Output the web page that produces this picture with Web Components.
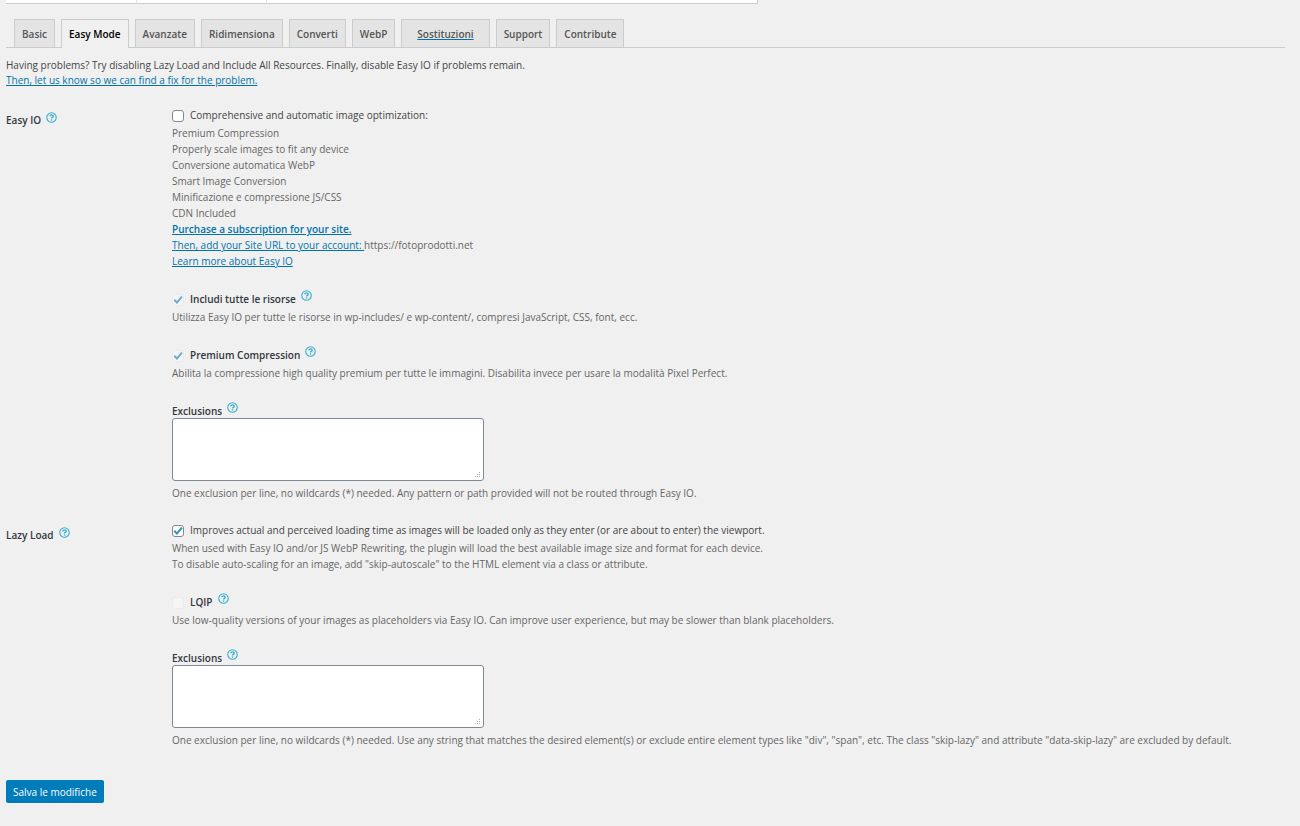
<!DOCTYPE html>
<html lang="it">
<head>
<meta charset="utf-8">
<meta name="viewport" content="width=device-width, initial-scale=1">
<title>Easy Mode</title>
<style>
  :root {
    --bg: #f0f0f0;
    --line: #ccc;
    --link: #0073aa;
    --text: #444;
    --strong: #32373c;
    --muted: #666;
    --control: #7e8993;
    --help: #35b0cd;
  }
  body {
    margin: 0;
    background: var(--bg);
    color: var(--text);
    font: 10px/16px "Open Sans", "Noto Sans", sans-serif;
  }
  a { color: var(--link); }
  b { font-weight: 600; }
</style>
</head>
<body>
<settings-page>
  <status-strip slot="status"></status-strip>
  <nav-tabs slot="tabs">
    <nav-tab>Basic</nav-tab>
    <nav-tab active>Easy Mode</nav-tab>
    <nav-tab>Avanzate</nav-tab>
    <nav-tab>Ridimensiona</nav-tab>
    <nav-tab>Converti</nav-tab>
    <nav-tab>WebP</nav-tab>
    <nav-tab linked>Sostituzioni</nav-tab>
    <nav-tab>Support</nav-tab>
    <nav-tab>Contribute</nav-tab>
  </nav-tabs>
  <span slot="notice">Having problems? Try disabling Lazy Load and Include All Resources. Finally, disable Easy IO if problems remain.<br>
  <a href="#support">Then, let us know so we can find a fix for the problem.</a></span>

  <setting-row label="Easy IO">
    <check-field label="Comprehensive and automatic image optimization:">
      Premium Compression<br>
      Properly scale images to fit any device<br>
      Conversione automatica WebP<br>
      Smart Image Conversion<br>
      Minificazione e compressione JS/CSS<br>
      CDN Included<br>
      <a href="#purchase"><b>Purchase a subscription for your site.</b></a><br>
      <a href="#add-site">Then, add your Site URL to your account:&nbsp;</a>https://fotoprodotti.net<br>
      <a href="#docs">Learn more about Easy IO</a>
    </check-field>
    <check-field label="Includi tutte le risorse" strong help checked disabled>Utilizza Easy IO per tutte le risorse in wp-includes/ e wp-content/, compresi JavaScript, CSS, font, ecc.</check-field>
    <check-field label="Premium Compression" strong help checked disabled>Abilita la compressione high quality premium per tutte le immagini. Disabilita invece per usare la modalità Pixel Perfect.</check-field>
    <area-field label="Exclusions">One exclusion per line, no wildcards (*) needed. Any pattern or path provided will not be routed through Easy IO.</area-field>
  </setting-row>

  <setting-row label="Lazy Load">
    <check-field label="Improves actual and perceived loading time as images will be loaded only as they enter (or are about to enter) the viewport." checked>
      When used with Easy IO and/or JS WebP Rewriting, the plugin will load the best available image size and format for each device.<br>
      To disable auto-scaling for an image, add "skip-autoscale" to the HTML element via a class or attribute.
    </check-field>
    <check-field label="LQIP" strong help disabled>Use low-quality versions of your images as placeholders via Easy IO. Can improve user experience, but may be slower than blank placeholders.</check-field>
    <area-field label="Exclusions">One exclusion per line, no wildcards (*) needed. Use any string that matches the desired element(s) or exclude entire element types like "div", "span", etc. The class "skip-lazy" and attribute "data-skip-lazy" are excluded by default.</area-field>
  </setting-row>

  <save-button slot="actions">Salva le modifiche</save-button>
</settings-page>

<script>
class BaseElement extends HTMLElement {
  constructor() {
    super();
    this.attachShadow({ mode: "open" });
  }

  connectedCallback() {
    this.shadowRoot.innerHTML = this.template();
  }

  get label() {
    return this.getAttribute("label") || "";
  }
}

class SettingsPage extends BaseElement {
  template() {
    return `
      <style>
        :host { display: block; padding: 0 15px 21px 6px; }
        p { margin: 10px 0 18px; line-height: 15px; }
        form { display: flex; flex-direction: column; gap: 20px; }
        .actions { margin-top: 12px; }
      </style>
      <slot name="status"></slot>
      <slot name="tabs"></slot>
      <p><slot name="notice"></slot></p>
      <form>
        <slot></slot>
        <div class="actions"><slot name="actions"></slot></div>
      </form>
    `;
  }
}

/* Bottom edge of the status table above the tabs */
class StatusStrip extends BaseElement {
  template() {
    return `
      <style>
        :host {
          display: grid;
          grid-template-columns: 131px 130px minmax(0, 491px);
        }
        div {
          height: 3px;
          background: #fff;
          border-bottom: 1px solid var(--line);
          border-right: 1px solid #e1e1e1;
        }
        div:first-child { border-left: 1px solid var(--line); }
        div:last-child { border-right-color: var(--line); }
      </style>
      <div></div><div></div><div></div>
    `;
  }
}

class NavTabs extends BaseElement {
  template() {
    return `
      <style>
        :host { display: block; margin-top: 15px; }
        nav {
          display: flex;
          gap: 6px;
          padding-left: 8px;
          border-bottom: 1px solid var(--line);
        }
      </style>
      <nav><slot></slot></nav>
    `;
  }
}

class NavTab extends BaseElement {
  template() {
    return `
      <style>
        :host { display: block; }
        a {
          display: block;
          padding: 6px 7px 5px;
          border: 1px solid var(--line);
          border-bottom: 0;
          background: #e4e4e4;
          color: #555;
          font-weight: 600;
          text-decoration: none;
        }
        :host([active]) a {
          margin-bottom: -1px;
          padding-bottom: 6px;
          background: var(--bg);
          color: #000;
        }
        :host([linked]) a { padding-inline: 15px; }
        :host([linked]) span {
          text-decoration: underline;
          text-decoration-color: var(--link);
        }
      </style>
      <a href="#"><span><slot></slot></span></a>
    `;
  }
}

class HelpIcon extends BaseElement {
  template() {
    return `
      <style>
        :host { display: inline-flex; }
        a { display: block; height: 11px; color: var(--help); }
        svg { display: block; width: 11px; height: 11px; }
      </style>
      <a href="#help" aria-label="Help">
        <svg viewBox="0 0 20 20" fill="none" stroke="currentColor" stroke-width="2">
          <circle cx="10" cy="10" r="8.6"/>
          <path d="M7 7.8C7 6 8.3 5.2 10 5.2s3.1.9 3.1 2.5c0 2.2-2.9 2.2-2.9 4.3" stroke-width="2.6"/>
          <circle cx="10.1" cy="14.6" r="1.5" fill="currentColor" stroke="none"/>
        </svg>
      </a>
    `;
  }
}

class SettingRow extends BaseElement {
  template() {
    return `
      <style>
        :host {
          display: grid;
          grid-template-columns: 166px minmax(0, 1fr);
        }
        .name {
          display: flex;
          gap: 5px;
          padding-top: 6px;
          color: var(--strong);
          font-weight: 600;
        }
        .fields { display: flex; flex-direction: column; gap: 21px; }
      </style>
      <div class="name">${this.label}<help-icon></help-icon></div>
      <div class="fields"><slot></slot></div>
    `;
  }
}

class CheckField extends BaseElement {
  template() {
    const checked = this.hasAttribute("checked") ? "checked" : "";
    const disabled = this.hasAttribute("disabled") ? "disabled" : "";
    const help = this.hasAttribute("help") ? "<help-icon></help-icon>" : "";

    return `
      <style>
        :host { display: block; }
        .head { display: flex; gap: 5px; height: 19px; }
        label { display: flex; gap: 6px; line-height: 18px; }
        :host([strong]) label { color: var(--strong); font-weight: 600; }
        .box { display: grid; align-self: center; }
        input, svg { grid-area: 1 / 1; width: 12px; height: 12px; }
        input {
          appearance: none;
          box-sizing: border-box;
          margin: 0;
          border: 1px solid var(--control);
          border-radius: 3px;
          background: #fff;
        }
        svg {
          display: none;
          fill: none;
          stroke: #2d8fc0;
          stroke-width: 2;
          pointer-events: none;
        }
        input:checked + svg { display: block; }
        input:disabled { border-color: #ebebeb; background: #f5f5f5; }
        input:disabled + svg { opacity: 0.7; }
        .note { color: var(--muted); }
      </style>
      <div class="head">
        <label>
          <span class="box">
            <input type="checkbox" ${checked} ${disabled}>
            <svg viewBox="0 0 12 12"><path d="M2.3 5.8 4.9 8.6 9.9 2.6"/></svg>
          </span>
          <span>${this.label}</span>
        </label>
        ${help}
      </div>
      <div class="note"><slot></slot></div>
    `;
  }
}

class AreaField extends BaseElement {
  template() {
    return `
      <style>
        :host { display: block; }
        .head { display: flex; gap: 5px; height: 16px; }
        label { color: var(--strong); font-weight: 600; line-height: 18px; }
        textarea {
          display: block;
          box-sizing: border-box;
          width: 312px;
          max-width: 100%;
          height: 63px;
          margin: 0 0 4px;
          border: 1px solid var(--control);
          border-radius: 3px;
          background: #fff;
          font: inherit;
        }
        textarea::-webkit-resizer {
          background:
            linear-gradient(#aaa, #aaa) 11px 7px / 1px 1px,
            linear-gradient(#aaa, #aaa) 9px 9px / 1px 1px,
            linear-gradient(#aaa, #aaa) 11px 9px / 1px 1px,
            linear-gradient(#aaa, #aaa) 7px 11px / 1px 1px,
            linear-gradient(#aaa, #aaa) 9px 11px / 1px 1px,
            linear-gradient(#aaa, #aaa) 11px 11px / 1px 1px;
          background-repeat: no-repeat;
        }
        .note { color: var(--muted); }
      </style>
      <div class="head">
        <label for="area">${this.label}</label>
        <help-icon></help-icon>
      </div>
      <textarea id="area"></textarea>
      <div class="note"><slot></slot></div>
    `;
  }
}

class SaveButton extends BaseElement {
  template() {
    return `
      <style>
        :host { display: inline-block; }
        button {
          display: block;
          padding: 4px 7px 3px;
          border: 0;
          border-radius: 2px;
          background: #007cba;
          color: #fff;
          font: inherit;
          cursor: pointer;
        }
      </style>
      <button type="submit"><slot></slot></button>
    `;
  }
}

customElements.define("settings-page", SettingsPage);
customElements.define("status-strip", StatusStrip);
customElements.define("nav-tabs", NavTabs);
customElements.define("nav-tab", NavTab);
customElements.define("help-icon", HelpIcon);
customElements.define("setting-row", SettingRow);
customElements.define("check-field", CheckField);
customElements.define("area-field", AreaField);
customElements.define("save-button", SaveButton);
</script>
</body>
</html>
